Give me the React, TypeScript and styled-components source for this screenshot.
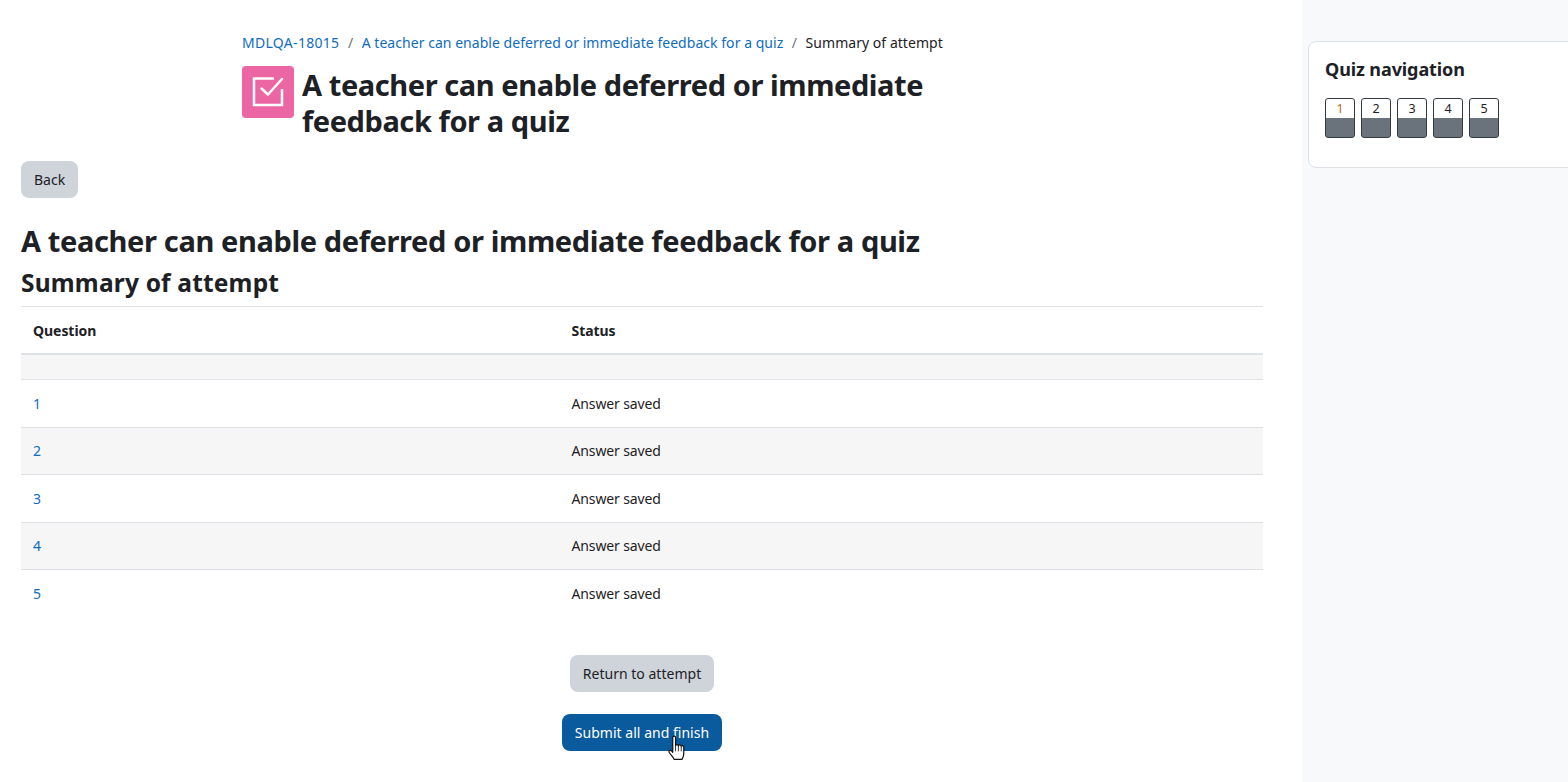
import React from "react";
import styled, { createGlobalStyle } from "styled-components";

const GlobalStyle = createGlobalStyle`
  html, body {
    margin: 0;
    padding: 0;
    height: 100%;
    overflow: hidden;
    background: #fff;
    font-family: "Noto Sans", "Open Sans", sans-serif;
    color: #1d2125;
  }
`;

const Page = styled.div`
  display: flex;
  width: 1568px;
  height: 782px;
  overflow: hidden;
`;

const Main = styled.main`
  width: 1302px;
  flex: none;
  box-sizing: border-box;
  padding: 32px 39px 0 21px;
`;

const Header = styled.header`
  margin-left: 221px;
  width: 720px;
`;

const Breadcrumb = styled.nav`
  display: flex;
  align-items: center;
  height: 20px;
  font-size: 14px;
  letter-spacing: 0.04px;
  white-space: nowrap;
`;

const Crumb = styled.a`
  color: #0f6cbf;
  &:first-child {
    letter-spacing: 0.3px;
  }
`;

const Sep = styled.span`
  color: #6a737b;
  margin: 0 8.5px;
`;

const Current = styled.span`
  color: #1d2125;
`;

const TitleRow = styled.div`
  display: flex;
  align-items: flex-start;
  margin-top: 14px;
`;

const QuizIcon = styled.div`
  width: 52px;
  height: 52px;
  flex: none;
  border-radius: 4px;
  background: #eb66a2;
  display: flex;
  align-items: center;
  justify-content: center;
`;

const Title = styled.h1`
  margin: 1px 0 1px 8px;
  font-size: 29px;
  line-height: 36px;
  font-weight: 700;
  width: 640px;
  letter-spacing: -0.42px;
`;

const Button = styled.button<{ $primary?: boolean }>`
  display: block;
  height: ${(p) => (p.$primary ? "37px" : "36.5px")};
  padding: 0 13px;
  border: none;
  border-radius: 8px;
  font-family: inherit;
  font-size: 14px;
  letter-spacing: 0.02px;
  background: ${(p) => (p.$primary ? "#0a5a9e" : "#ced4da")};
  color: ${(p) => (p.$primary ? "#fff" : "#1d2125")};
`;

const BackRow = styled.div`
  margin-top: 21px;
`;

const Heading = styled.h2`
  margin: 25.5px 0 0;
  font-size: 29px;
  line-height: 36px;
  font-weight: 700;
  letter-spacing: -0.37px;
  white-space: nowrap;
`;

const SubHeading = styled.h3`
  margin: 9px 0 0;
  font-size: 24.5px;
  line-height: 29px;
  font-weight: 700;
  letter-spacing: 0.18px;
`;

const Table = styled.table`
  width: 1242px;
  margin-top: 9px;
  border-collapse: collapse;
  table-layout: fixed;
  font-size: 14px;
  letter-spacing: -0.14px;
`;

const HeadCell = styled.th`
  height: 47px;
  box-sizing: border-box;
  padding: 1px 12px 0;
  text-align: left;
  font-weight: 700;
  letter-spacing: -0.05px;
  border-top: 1px solid #dee2e6;
  border-bottom: 2px solid #dee2e6;
`;

const Row = styled.tr<{ $shaded?: boolean }>`
  background: ${(p) => (p.$shaded ? "#f6f6f6" : "#fff")};
`;

const Cell = styled.td`
  height: 47.5px;
  box-sizing: border-box;
  padding: 0 12px;
  border-top: 1px solid #dee2e6;
`;

const SpacerCell = styled.td`
  height: 24.5px;
  padding: 0;
`;

const QuestionLink = styled.a`
  color: #0f6cbf;
`;

const Actions = styled.div`
  display: flex;
  flex-direction: column;
  align-items: center;
  gap: 22px;
  margin-top: 38px;
  width: 1242px;
`;

const SubmitWrap = styled.div`
  position: relative;
`;

const Cursor = styled.svg`
  position: absolute;
  left: 106px;
  top: 21px;
`;

const Aside = styled.aside`
  flex: 1;
  background: #f8f9fa;
  padding: 41px 0 0 6px;
  min-width: 0;
`;

const NavCard = styled.section`
  box-sizing: border-box;
  width: 300px;
  height: 127px;
  background: #fff;
  border: 1px solid #dee2e6;
  border-radius: 8px;
  padding: 16px 16px;
`;

const NavTitle = styled.h5`
  margin: 0;
  font-size: 18px;
  line-height: 22px;
  font-weight: 700;
  letter-spacing: -0.1px;
`;

const NavGrid = styled.div`
  display: flex;
  gap: 6px;
  margin-top: 18px;
`;

const NavButton = styled.div<{ $current?: boolean }>`
  box-sizing: border-box;
  width: 30px;
  height: 40px;
  border: 1px solid #343a40;
  border-radius: 3px;
  overflow: hidden;
  background: linear-gradient(#fff 0 19px, #6a737b 19px);
  text-align: center;
  font-size: 12.5px;
  line-height: 19px;
  color: ${(p) => (p.$current ? "#a9700f" : "#1d2125")};
`;

const rows = [1, 2, 3, 4, 5];

export default function App() {
  return (
    <Page>
      <GlobalStyle />
      <Main>
        <Header>
          <Breadcrumb>
            <Crumb>MDLQA-18015</Crumb>
            <Sep>/</Sep>
            <Crumb>A teacher can enable deferred or immediate feedback for a quiz</Crumb>
            <Sep>/</Sep>
            <Current>Summary of attempt</Current>
          </Breadcrumb>
          <TitleRow>
            <QuizIcon>
              <svg width="32" height="32" viewBox="0 0 32 32" fill="none" stroke="#fff" strokeWidth="2.5">
                <path d="M30 13v16H2V2.500h20" />
                <path d="M9.500 12.500l6.500 6L30 3" strokeLinecap="round" strokeLinejoin="round" />
              </svg>
            </QuizIcon>
            <Title>A teacher can enable deferred or immediate feedback for a quiz</Title>
          </TitleRow>
        </Header>
        <BackRow>
          <Button>Back</Button>
        </BackRow>
        <Heading>A teacher can enable deferred or immediate feedback for a quiz</Heading>
        <SubHeading>Summary of attempt</SubHeading>
        <Table>
          <colgroup>
            <col style={{ width: 538.5 }} />
            <col />
          </colgroup>
          <thead>
            <tr>
              <HeadCell>Question</HeadCell>
              <HeadCell>Status</HeadCell>
            </tr>
          </thead>
          <tbody>
            <Row $shaded>
              <SpacerCell colSpan={2} />
            </Row>
            {rows.map((n) => (
              <Row key={n} $shaded={n % 2 === 0}>
                <Cell>
                  <QuestionLink>{n}</QuestionLink>
                </Cell>
                <Cell>Answer saved</Cell>
              </Row>
            ))}
          </tbody>
        </Table>
        <Actions>
          <Button>Return to attempt</Button>
          <SubmitWrap>
            <Button $primary>Submit all and finish</Button>
            <Cursor width="17" height="27" viewBox="0 0 18 28">
              <path
                d="M5 2.500c0-2 3-2 3 0V11c.3-1.600 3-1.600 3 .2.3-1.500 2.800-1.400 3 .4.5-1.200 2.700-1 2.700 1V19c0 3-1 4.500-1.800 6.500H6.500C5.500 23 3.500 21.500 1.500 18.500c-1.200-2 .8-3.500 2.200-2L5 18V2.500z"
                fill="#fff"
                stroke="#111"
                strokeWidth="1.3"
                strokeLinejoin="round"
              />
              <path d="M8 11v6M11 11.200V17M14 11.600V17" stroke="#111" strokeWidth="0.9" fill="none" />
            </Cursor>
          </SubmitWrap>
        </Actions>
      </Main>
      <Aside>
        <NavCard>
          <NavTitle>Quiz navigation</NavTitle>
          <NavGrid>
            {rows.map((n) => (
              <NavButton key={n} $current={n === 1}>
                {n}
              </NavButton>
            ))}
          </NavGrid>
        </NavCard>
      </Aside>
    </Page>
  );
}
